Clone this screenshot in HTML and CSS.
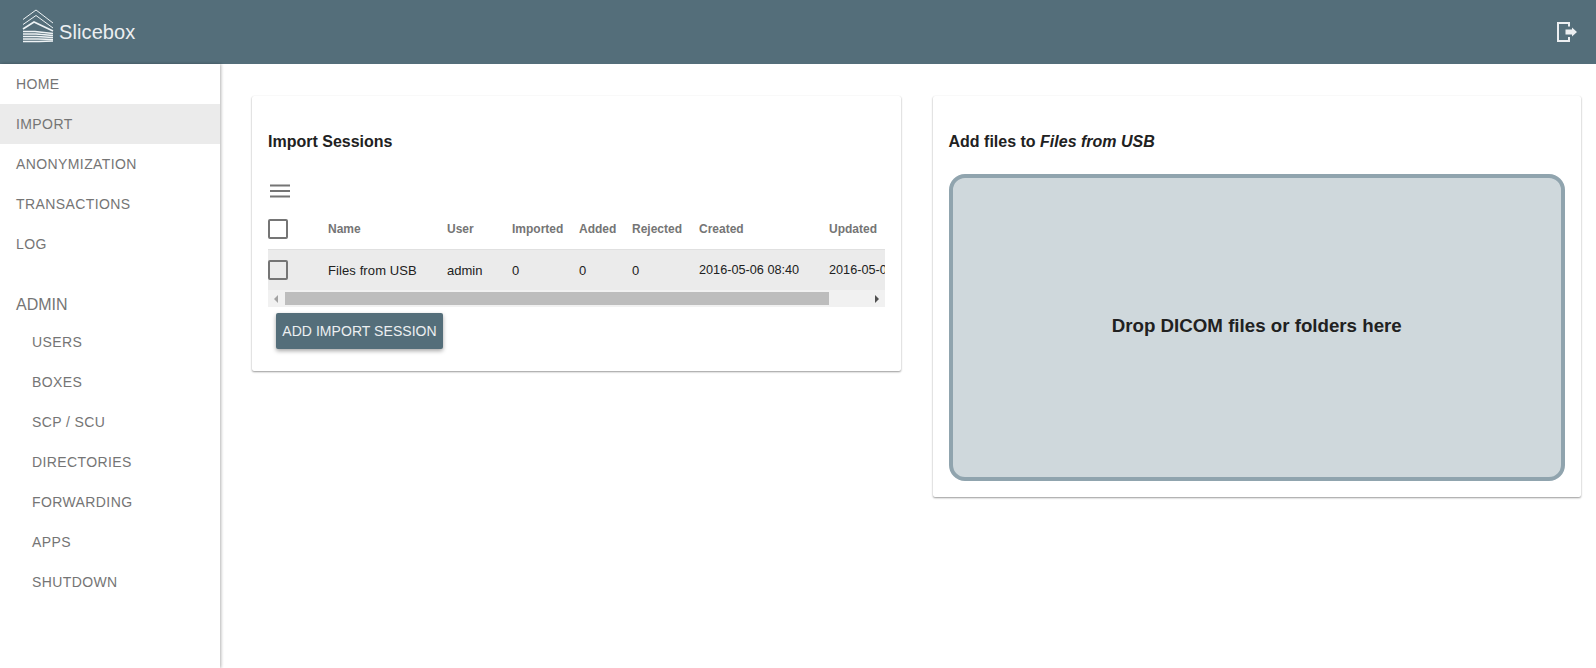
FILE: index.html
```html
<!DOCTYPE html>
<html lang="en">
<head>
<meta charset="utf-8">
<title>Slicebox</title>
<link rel="stylesheet" href="styles.css">
</head>
<body>
<header class="topbar">
  <div class="brand">
    <svg class="logo" width="32" height="34" viewBox="0 0 32 34" fill="none" stroke="#eef3f5" stroke-width="1">
      <path d="M1 10.5 L14 1 L31 14"/>
      <path d="M1 15.5 L14 6.5 L31 19"/>
      <path d="M1 20 L12 13 L31 22" stroke-width="1.6"/>
      <path d="M1 22.5 H13 L31 24.5" stroke-width="1.6"/>
      <path d="M1 25 H14 L31 26.5" stroke-width="1.6"/>
      <path d="M1 27.5 H15 L31 28.5" stroke-width="1.6"/>
      <path d="M1 30 H16 L31 30.5" stroke-width="1.6"/>
      <path d="M1 32.5 H17 L31 32" stroke-width="1.6"/>
    </svg>
    <span class="brand-name">Slicebox</span>
  </div>
  <svg class="logout" width="22" height="22" viewBox="0 0 22 22" fill="none">
    <path d="M13 5.5 V2 H2 V20 H13 V16" stroke="#eceff1" stroke-width="2"/>
    <path d="M9.5 8.5 H16 V6.5 L21 11 L16 15.5 V13.5 H9.5 Z" fill="#eceff1"/>
  </svg>
</header>
<div class="shell">
  <nav class="sidebar">
    <a class="nav-item">HOME</a>
    <a class="nav-item active">IMPORT</a>
    <a class="nav-item">ANONYMIZATION</a>
    <a class="nav-item">TRANSACTIONS</a>
    <a class="nav-item">LOG</a>
    <div class="nav-heading">ADMIN</div>
    <a class="nav-item sub">USERS</a>
    <a class="nav-item sub">BOXES</a>
    <a class="nav-item sub">SCP / SCU</a>
    <a class="nav-item sub">DIRECTORIES</a>
    <a class="nav-item sub">FORWARDING</a>
    <a class="nav-item sub">APPS</a>
    <a class="nav-item sub">SHUTDOWN</a>
  </nav>
  <main class="content">
    <section class="card card-left">
      <h2 class="card-title">Import Sessions</h2>
      <svg class="menu-icon" width="20" height="14" viewBox="0 0 20 14" fill="none" stroke="#757575" stroke-width="2">
        <path d="M0 1.5H20M0 7H20M0 12.5H20"/>
      </svg>
      <div class="table-wrap">
        <div class="table-row head">
          <div class="cell c-check"><span class="checkbox"></span></div>
          <div class="cell c-name">Name</div>
          <div class="cell c-user">User</div>
          <div class="cell c-imp">Imported</div>
          <div class="cell c-add">Added</div>
          <div class="cell c-rej">Rejected</div>
          <div class="cell c-created">Created</div>
          <div class="cell c-updated">Updated</div>
        </div>
        <div class="table-row body">
          <div class="cell c-check"><span class="checkbox"></span></div>
          <div class="cell c-name">Files from USB</div>
          <div class="cell c-user">admin</div>
          <div class="cell c-imp">0</div>
          <div class="cell c-add">0</div>
          <div class="cell c-rej">0</div>
          <div class="cell c-created date">2016-05-06 08:40</div>
          <div class="cell c-updated date">2016-05-06 08:40</div>
        </div>
        <div class="scrollbar">
          <span class="arrow arrow-left"></span>
          <span class="thumb"></span>
          <span class="arrow arrow-right"></span>
        </div>
      </div>
      <button class="add-btn">ADD IMPORT SESSION</button>
    </section>
    <section class="card card-right">
      <h2 class="card-title">Add files to <em>Files from USB</em></h2>
      <div class="dropzone">Drop DICOM files or folders here</div>
    </section>
  </main>
</div>
</body>
</html>
```
FILE: styles.css
```css
* { box-sizing: border-box; }
html, body { margin: 0; height: 100%; }
body {
  font-family: "Liberation Sans", Arial, sans-serif;
  background: #fff;
  color: #212121;
  overflow: hidden;
}
.topbar {
  height: 64px;
  background: #546e7a;
  display: flex;
  align-items: center;
  justify-content: space-between;
  padding: 0 18px 0 22px;
}
.brand { display: flex; align-items: flex-start; height: 64px; padding-top: 9px; }
.logo { display: block; }
.brand-name { color: #eceff1; font-size: 20px; line-height: 24px; margin: 11px 0 0 5px; letter-spacing: .1px; }
.logout { display: block; }
.shell { display: flex; height: 604px; }
.sidebar {
  width: 220px;
  flex: none;
  box-shadow: 1px 0 3px rgba(0,0,0,.3);
}
.nav-item {
  display: flex;
  align-items: center;
  height: 40px;
  padding-left: 16px;
  font-size: 14px;
  letter-spacing: .4px;
  color: #757575;
}
.nav-item.active { background: #ebebeb; }
.nav-item.sub { padding-left: 32px; }
.nav-heading {
  font-size: 16px;
  color: #757575;
  height: 35px;
  line-height: 35px;
  padding-left: 16px;
  margin-top: 23px;
}
.content {
  flex: 1;
  display: flex;
  align-items: flex-start;
  gap: 32px;
  padding: 32px 15px 0 32px;
}
.card {
  flex: 1 1 0;
  min-width: 0;
  background: #fff;
  border-radius: 2px;
  box-shadow: 0 1px 2px rgba(0,0,0,.4), 0 0 1px rgba(0,0,0,.06);
  padding: 0 16px;
}
.card-left { height: 275px; }
.card-right { height: 401px; }
.card-title {
  font-size: 16px;
  font-weight: bold;
  color: #212121;
  margin: 0;
  padding-top: 36px;
  line-height: 19px;
}
.menu-icon { display: block; margin: 33px 0 0 2px; }
.table-wrap {
  margin-top: 10px;
  overflow: hidden;
}
.table-row { display: flex; align-items: center; white-space: nowrap; font-size: 12px; }
.table-row.head { height: 41px; font-weight: bold; color: #757575; }
.table-row.body { height: 41px; background: #ebebeb; color: #212121; border-top: 1px solid #e0e0e0; font-size: 13px; }
.table-row.body .date { font-size: 12.7px; }
.c-name { letter-spacing: .1px; }
.head .c-name { letter-spacing: 0; }
.cell { flex: none; }
.checkbox {
  display: block;
  width: 20px;
  height: 20px;
  border: 2px solid #757575;
  border-radius: 2px;
}
.c-check { width: 60px; }
.c-name { width: 119px; }
.c-user { width: 65px; }
.c-imp { width: 67px; }
.c-add { width: 53px; }
.c-rej { width: 67px; }
.c-created { width: 130px; }
.scrollbar {
  position: relative;
  height: 17px;
  background: #f1f1f1;
  display: flex;
  align-items: center;
  justify-content: space-between;
  padding: 0 6px;
}
.thumb {
  position: absolute;
  left: 17px;
  top: 2px;
  width: 544px;
  height: 13px;
  background: #bdbdbd;
}
.arrow { width: 0; height: 0; border-top: 4px solid transparent; border-bottom: 4px solid transparent; }
.arrow-left { border-right: 4px solid #a3a3a3; }
.arrow-right { border-left: 4px solid #505050; }
.add-btn {
  display: block;
  margin: 6px 0 0 8px;
  width: 167px;
  height: 36px;
  background: #546e7a;
  color: #eceff1;
  border: 0;
  border-radius: 2px;
  padding: 0;
  font-family: inherit;
  font-size: 14px;
  letter-spacing: .05px;
  box-shadow: 0 2px 4px rgba(0,0,0,.35);
}
.dropzone {
  margin-top: 23px;
  height: 307px;
  padding-bottom: 4px;
  background: #cfd8dc;
  border: 4px solid #90a4ae;
  border-radius: 16px;
  display: flex;
  align-items: center;
  justify-content: center;
  font-size: 18.72px;
  font-weight: bold;
  color: #212121;
}
```
